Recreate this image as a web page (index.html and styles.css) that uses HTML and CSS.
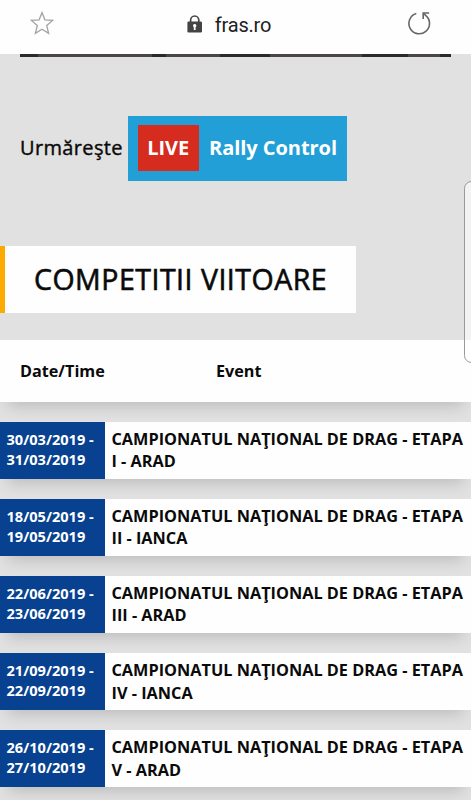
FILE: index.html
```html
<!DOCTYPE html>
<html lang="en-US">
<head>
    <meta charset="UTF-8">
    <meta name="viewport" content="width=device-width, initial-scale=1.0">
    <title>FRAS - Competitii viitoare</title>
    <link rel="stylesheet" href="styles.css">
</head>
<body>
    <header class="browser-bar">
        <svg class="icon-star" width="24" height="24" viewBox="0 0 24 24">
            <path d="M12 1.6 L14.9 8.8 L22.6 9.4 L16.7 14.4 L18.6 22.4 L12 18.2 L5.4 22.4 L7.3 14.4 L1.4 9.4 L9.1 8.8 Z"/>
        </svg>
        <div class="address">
            <svg class="icon-lock" width="16" height="18" viewBox="0 0 16 18">
                <path class="shackle" d="M3.6 8 V5.3 a4.1 4.3 0 0 1 8.2 0 V8"/>
                <rect x="0.4" y="6.6" width="14.6" height="10.8" rx="1.2"/>
                <path class="keyhole" d="M7.7 9 a1.8 1.8 0 0 1 .9 3.3 V15 H6.8 V12.3 A1.8 1.8 0 0 1 7.7 9 Z"/>
            </svg>
            <span class="host">fras.ro</span>
        </div>
        <svg class="icon-reload" width="24" height="24" viewBox="0 0 24 24">
            <path d="M9.3 2.6 A10.3 10.3 0 1 0 18.6 4.4 L16.4 2.2"/>
            <path d="M22.2 2 H16.2 V8"/>
        </svg>
    </header>

    <div class="slider-edge"></div>

    <main>
        <div class="live">
            <span class="live-label">Urmăreşte</span>
            <a class="live-button"><span class="live-tag">LIVE</span><span class="live-name">Rally Control</span></a>
        </div>

        <h1>COMPETITII VIITOARE</h1>

        <div class="events-head">
            <span class="col-date">Date/Time</span>
            <span class="col-event">Event</span>
        </div>

        <div class="event">
            <div class="event-date">30/03/2019 -<br>31/03/2019</div>
            <div class="event-name">CAMPIONATUL NAŢIONAL DE DRAG - ETAPA<br>I - ARAD</div>
        </div>
        <div class="event">
            <div class="event-date">18/05/2019 -<br>19/05/2019</div>
            <div class="event-name">CAMPIONATUL NAŢIONAL DE DRAG - ETAPA<br>II - IANCA</div>
        </div>
        <div class="event">
            <div class="event-date">22/06/2019 -<br>23/06/2019</div>
            <div class="event-name">CAMPIONATUL NAŢIONAL DE DRAG - ETAPA<br>III - ARAD</div>
        </div>
        <div class="event">
            <div class="event-date">21/09/2019 -<br>22/09/2019</div>
            <div class="event-name">CAMPIONATUL NAŢIONAL DE DRAG - ETAPA<br>IV - IANCA</div>
        </div>
        <div class="event">
            <div class="event-date">26/10/2019 -<br>27/10/2019</div>
            <div class="event-name">CAMPIONATUL NAŢIONAL DE DRAG - ETAPA<br>V - ARAD</div>
        </div>
    </main>

    <div class="edge-handle"></div>
</body>
</html>
```
FILE: styles.css
```css
* {
    box-sizing: border-box;
}

body {
    margin: 0;
    height: 800px;
    overflow: hidden;
    position: relative;
    background-color: #e1e1e1;
    color: #0a0a0a;
    font-family: "Open Sans", "Noto Sans", sans-serif;
}

/* browser bar */
.browser-bar {
    display: flex;
    align-items: flex-start;
    justify-content: space-between;
    height: 54px;
    padding: 11px 40px 0 30px;
    background-color: #fefefe;
}

.icon-star {
    fill: none;
    stroke: #a3a3a3;
    stroke-width: 1.3;
}

.icon-reload {
    fill: none;
    stroke: #666;
    stroke-width: 1.6;
}

.address {
    display: flex;
    gap: 12px;
    margin-left: -3px;
}

.icon-lock {
    margin-top: 4px;
    fill: #444;
}

.icon-lock .shackle {
    fill: none;
    stroke: #444;
    stroke-width: 1.7;
}

.icon-lock .keyhole {
    fill: #fff;
}

.host {
    font-family: Roboto, sans-serif;
    font-size: 20px;
    line-height: 28px;
    letter-spacing: -0.2px;
    color: #222;
}

/* bottom of the picture slider */
.slider-edge {
    height: 3px;
    margin: 0 20px;
    background: linear-gradient(to right, #2b292a 0 18px, #4a4648 18px 132px, #2b292a 132px 146px, #4a4648 146px 200px, #2b292a 200px 250px, #4a4648 250px 342px, #2b292a 342px 388px, #4a4648 388px 420px, #2b292a 420px);
}

.live {
    display: flex;
    height: 65px;
    margin: 59px 0 0 20px;
    font-size: 20px;
    line-height: 63px;
}

.live-label {
    width: 108px;
    letter-spacing: 0.35px;
    -webkit-text-stroke: 0.4px #0a0a0a;
    white-space: nowrap;
}

.live-button {
    display: flex;
    width: 219px;
    height: 65px;
    padding-left: 9.5px;
    background-color: #219fd6;
    color: #fff;
    font-weight: 700;
    white-space: nowrap;
}

.live-tag {
    width: 61.5px;
    height: 46px;
    margin: 9px 10px 0 0;
    line-height: 45px;
    text-align: center;
    background-color: #d62c20;
}

.live-name {
    letter-spacing: -0.05px;
}

h1 {
    width: 356px;
    height: 67px;
    margin: 65px 0 27px;
    padding-left: 29px;
    border-left: 5px solid #fdaa00;
    background-color: #fefefe;
    font-size: 28.5px;
    font-weight: 400;
    line-height: 66px;
    letter-spacing: 0.5px;
    -webkit-text-stroke: 0.6px #0a0a0a;
    white-space: nowrap;
}

/* events table */
.events-head {
    display: flex;
    height: 62px;
    margin-bottom: 19.5px;
    padding-left: 20px;
    background-color: #fefefe;
    box-shadow: 0 12px 15px -8px rgba(0, 0, 0, 0.17);
    font-size: 16.2px;
    font-weight: 700;
    line-height: 62px;
}

.col-date {
    width: 196px;
}

.event {
    display: flex;
    height: 57.5px;
    margin-bottom: 19.6px;
    background-color: #fefefe;
    box-shadow: 0 12px 15px -8px rgba(0, 0, 0, 0.17);
    white-space: nowrap;
}

.event-date {
    width: 105px;
    padding: 7.5px 0 0 6.5px;
    background-color: #07418f;
    color: #fff;
    font-size: 14.6px;
    font-weight: 700;
    line-height: 20px;
}

.event-name {
    padding: 6.5px 0 0 6.5px;
    font-size: 16.3px;
    font-weight: 700;
    line-height: 22.3px;
}

/* side panel handle of the phone */
.edge-handle {
    position: absolute;
    top: 181px;
    right: -8px;
    width: 15px;
    height: 182px;
    border: 1px solid #999;
    border-radius: 8px;
    background-color: rgba(255, 255, 255, 0.6);
}
```
